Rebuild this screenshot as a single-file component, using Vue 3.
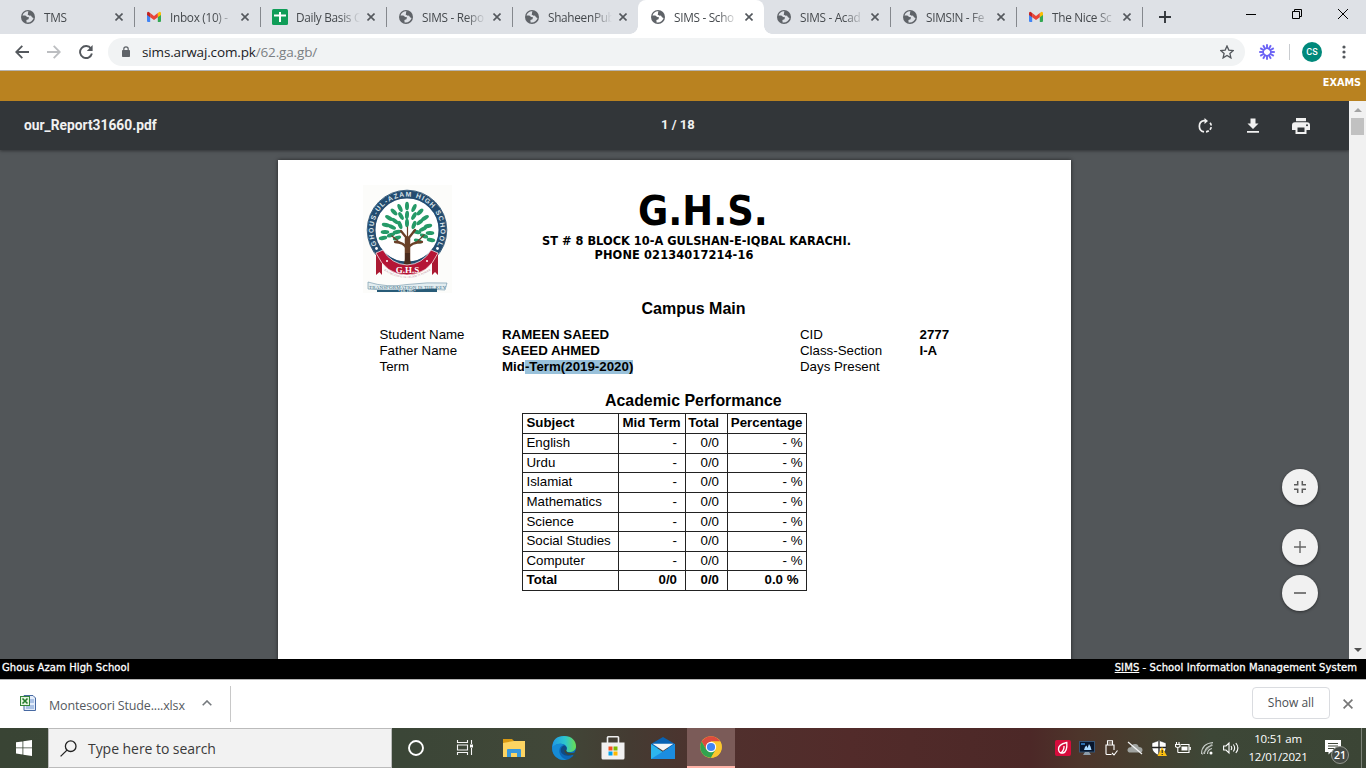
<script setup>
const tabs = [
  { title: 'TMS', icon: 'globe' },
  { title: 'Inbox (10) - ', icon: 'gmail' },
  { title: 'Daily Basis C', icon: 'sheets' },
  { title: 'SIMS - Repo', icon: 'globe' },
  { title: 'ShaheenPub', icon: 'globe' },
  { title: 'SIMS - Scho', icon: 'globe', active: true },
  { title: 'SIMS - Acad', icon: 'globe' },
  { title: 'SIMS!N - Fe', icon: 'globe' },
  { title: 'The Nice Sc', icon: 'gmail' },
]
const subjects = ['English', 'Urdu', 'Islamiat', 'Mathematics', 'Science', 'Social Studies', 'Computer']
const leaves = [
  [44, 21, 0], [37, 23, -25], [51, 23, 25], [31, 27, -45], [57, 27, 45], [44, 30, 5], [38, 31, -30], [51, 31, 30],
  [26, 33, -60], [62, 33, 60], [32, 36, -50], [57, 37, 50], [23, 40, -75], [65, 41, 75], [29, 42, -65], [60, 44, 65],
  [22, 47, -90], [67, 48, 90], [28, 50, 70], [61, 51, -70], [44, 38, 0], [37, 40, -20], [51, 40, 20], [34, 47, 80], [54, 47, -80],
  [20, 53, 80], [68, 55, -80], [34, 53, 70], [55, 56, -70],
]
const rays = Array.from({ length: 12 }, (_, i) => i * 30)
</script>

<template>
  <div class="screen">
    <div class="tabstrip">
      <div v-for="(t, i) in tabs" :key="i" class="tab" :class="{ active: t.active, noline: i === 4 || i === 5 }">
        <svg v-if="t.icon === 'globe'" class="fav" viewBox="0 0 14 14">
          <circle cx="7" cy="7" r="7" fill="#5f6368" />
          <path d="M7.6 1.3C5 .9 2.2 2.600 1.500 5.500L4.300 5.600 6.200 7.100 8 7.300 7.500 9.200 5.400 9.900 5.600 12.400C8.500 13.100 11.800 11.200 12.600 8L11 7.200 10.300 5.300 8.300 5.500 6.700 4.500 7.300 3Z" :fill="t.active ? '#fff' : '#dee1e6'" />
          <path d="M7.600 1.300 10.300 2.200 12.200 4.500 12.600 7.200 11 7 10.200 5.400 8 5.300 6.800 4.300Z" fill="#5f6368" />
        </svg>
        <svg v-else-if="t.icon === 'gmail'" class="fav" viewBox="0 0 14 14">
          <path d="M0 3.500V11q0 1 1 1H3.200V5.800Z" fill="#4285f4" />
          <path d="M14 3.500V11q0 1-1 1H10.800V5.800Z" fill="#34a853" />
          <path d="M10.800 3 12.200 2Q14 1.400 14 3.600V5L10.800 7.300Z" fill="#fbbc04" />
          <path d="M3.200 3 7 5.900 10.800 3V7.300L7 10.100 3.200 7.300Z" fill="#ea4335" />
          <path d="M3.200 3 1.800 2Q0 1.400 0 3.600V5L3.200 7.300Z" fill="#c5221f" />
        </svg>
        <svg v-else class="fav sheet" viewBox="0 0 16 16">
          <rect width="16" height="16" rx="1.500" fill="#0f9d58" />
          <path d="M7 3H9V5.500H14V7.500H9V13H7V7.500H2V5.500H7Z" fill="#fff" />
        </svg>
        <span class="tabtext">{{ t.title }}</span>
        <svg class="tabx" viewBox="0 0 8 8"><path d="M.5.5 7.500 7.500M7.500.5.5 7.500" stroke="#54585d" stroke-width="1.600" /></svg>
      </div>
      <svg class="plus" viewBox="0 0 12 12"><path d="M6 0V12M0 6H12" stroke="#33373b" stroke-width="1.900" /></svg>
      <div class="wincontrols">
        <svg viewBox="0 0 10 10"><path d="M0 5.500H10" stroke="#000" /></svg>
        <svg viewBox="0 0 10 10" fill="none" stroke="#000"><path d="M.5 2.500H7.500V9.500H.5ZM2.500 2.500V.5H9.500V7.500H7.500" /></svg>
        <svg viewBox="0 0 10 10"><path d="M0 0 10 10M10 0 0 10" stroke="#000" /></svg>
      </div>
    </div>

    <div class="addressbar">
      <svg class="nav back" viewBox="0 0 14 14" fill="none" stroke="#54585d" stroke-width="1.800"><path d="M14 7H1.300M7.300.8 1.200 7 7.300 13.200" /></svg>
      <svg class="nav fwd" viewBox="0 0 14 14" fill="none" stroke="#bcbec1" stroke-width="1.800"><path d="M0 7H12.700M6.700.8 12.800 7 6.700 13.200" /></svg>
      <svg class="nav reload" viewBox="0 0 14 14"><path d="M12 3.600A6 6 0 1 0 12.900 8.500" fill="none" stroke="#54585d" stroke-width="1.900" /><path d="M13.600 0V6H7.800Z" fill="#54585d" /></svg>
      <div class="omnibox">
        <svg class="lock" viewBox="0 0 8 11"><path d="M1.800 4.500V3A2.200 2.200 0 0 1 6.200 3V4.500" fill="none" stroke="#5f6368" stroke-width="1.200" /><rect y="4" width="8" height="7" rx=".8" fill="#5f6368" /></svg>
        <span class="url">sims.arwaj.com.pk<i>/62.ga.gb/</i></span>
        <svg class="star" viewBox="0 0 14 14"><path d="M7 1 8.800 5.100 13.200 5.500 9.900 8.400 10.900 12.900 7 10.500 3.100 12.900 4.100 8.400.8 5.500 5.200 5.100Z" fill="none" stroke="#54585d" stroke-width="1.300" /></svg>
      </div>
      <svg class="burst" viewBox="-8 -8 16 16"><path v-for="a in rays" :key="a" d="M0-3V-7.800" stroke="#6b63f5" stroke-width="1.900" :transform="`rotate(${a})`" /><circle r="3.800" fill="none" stroke="#6b63f5" stroke-width="1.500" /></svg>
      <div class="divider"></div>
      <div class="avatar">CS</div>
      <svg class="kebab" viewBox="0 0 4 14" fill="#54585d"><circle cx="2" cy="2" r="1.600" /><circle cx="2" cy="7" r="1.600" /><circle cx="2" cy="12" r="1.600" /></svg>
    </div>

    <div class="sitebar">EXAMS</div>

    <div class="viewer">
      <div class="pdf">
        <div class="pdfbar">
          <span class="filename">our_Report31660.pdf</span>
          <span class="pages">1 / 18</span>
          <div class="actions">
            <svg viewBox="0 0 16 16" fill="none" stroke="#f1f1f1" stroke-width="1.700"><path d="M7 13.800A5.700 5.700 0 0 1 7 2.600H9" /><path d="M7.500 0 11 3 7.500 6Z" fill="#f1f1f1" stroke="none" /><path d="M9 13.800A5.700 5.700 0 0 0 12.500 4" stroke-dasharray="3 1.500" /></svg>
            <svg viewBox="0 0 16 16" fill="#f1f1f1"><path d="M5.500 .5H10.500V5.500H13.500L8 11 2.500 5.500H5.500ZM2 13H14V14.700H2Z" /></svg>
            <svg viewBox="0 0 18 16" fill="#f1f1f1" class="printer"><path d="M4 0H14V3.300H4ZM3 4.300H15A3 3 0 0 1 18 7.300V12H14.500V16H3.500V12H0V7.300A3 3 0 0 1 3 4.300Z" /><path d="M5.500 9.500H12.500V14H5.500Z" fill="#323639" /><circle cx="15" cy="7.300" r="1" fill="#323639" /></svg>
          </div>
        </div>

        <div class="page">
          <div class="letterhead">
            <svg class="crest" viewBox="0 0 89 108">
              <defs><path id="ring" d="M15.800 63.500A33.600 33.600 0 1 1 72.200 63.500" /><path id="low" d="M20 85Q44 101 68 85" /></defs>
              <rect width="89" height="108" fill="#fcfcfa" />
              <circle cx="44" cy="45" r="39.800" fill="#fff" stroke="#456883" stroke-width="1" />
              <circle cx="44" cy="45" r="35.500" fill="none" stroke="#244c70" stroke-width="8" />
              <circle cx="44" cy="45" r="31" fill="#fff" />
              <text class="ringtext" fill="#dbe4ea"><textPath href="#ring" startOffset="4" textLength="136">GHOUS-UL-AZAM HIGH SCHOOL</textPath></text>
              <g fill="#fff"><circle cx="13.500" cy="63.500" r="1.400" /><circle cx="74.500" cy="63.500" r="1.400" /></g>
              <g fill="#259a68"><ellipse v-for="(l, i) in leaves" :key="i" :cx="l[0]" :cy="l[1]" rx="2" ry="4.300" :transform="`rotate(${l[2]} ${l[0]} ${l[1]})`" /></g>
              <g fill="none" stroke="#6a4028" stroke-linecap="round"><path d="M44.500 81V54" stroke-width="5.500" /><path d="M44 64Q41 57 32 57M44.500 64Q48 57 59 57M44.500 54 38 46M45 54 52 45" stroke-width="2.300" /><path d="M44.500 54V42M36 57 29 51M54 57 61 50" stroke-width="1.200" /></g>
              <path d="M38 82Q43 79 42 68H47Q46 79 51 82Z" fill="#4a2b1e" />
              <path d="M13 67 19 71V90L16.500 87 13 90ZM75 67 69 71V90L72 87 75 90Z" fill="#aa1932" />
              <path d="M13 68 20 65Q28 79 44 80Q60 79 68 65L75 68Q65 90 44 90Q23 90 13 68Z" fill="#b51636" stroke="#fff" stroke-width=".7" />
              <g fill="#fff"><circle cx="24" cy="76" r="1" /><circle cx="64" cy="76" r="1" /></g>
              <text x="44.500" y="88" class="ghs" text-anchor="middle" fill="#fff">G.H.S</text>
              <text class="tiny" fill="#b98a94"><textPath href="#low" startOffset="1" textLength="50">KNOWLEDGE OF ISLAM IS POWER</textPath></text>
              <path d="M5 97Q24 103 44 99.500Q64 97 84 98L82 105Q64 103 44 105Q24 106 5 104Z" fill="#e3edf0" stroke="#668da2" stroke-width=".6" />
              <path d="M14 105Q44 105 74 103.500V107H14Z" fill="#285b78" />
              <text x="6" y="103.800" class="motto" textLength="77" fill="#426f86">TRANSFORMATION IS THE KEY</text>
              <text x="44" y="107.200" class="est" text-anchor="middle" fill="#fff">• Est. 1995 •</text>
            </svg>
            <div class="headtext">
              <div class="school">G.H.S.</div>
              <div class="addr">ST # 8 BLOCK 10-A GULSHAN-E-IQBAL KARACHI.</div>
              <div class="addr phone">PHONE 02134017214-16</div>
            </div>
          </div>
          <div class="campus">Campus Main</div>
          <div class="details">
            <span>Student Name</span><b>RAMEEN SAEED</b><span>CID</span><b>2777</b>
            <span>Father Name</span><b>SAEED AHMED</b><span>Class-Section</span><b>I-A</b>
            <span>Term</span><b>Mid<mark>-Term(2019-2020)</mark></b><span>Days Present</span><b></b>
          </div>
          <div class="perf">Academic Performance</div>
          <div class="marks">
            <div class="row bold head"><span>Subject</span><span>Mid Term</span><span>Total</span><span>Percentage</span></div>
            <div v-for="s in subjects" :key="s" class="row"><span>{{ s }}</span><span>-</span><span>0/0</span><span>- %</span></div>
            <div class="row bold total"><span>Total</span><span>0/0</span><span>0/0</span><span>0.0 %</span></div>
          </div>
        </div>

        <div class="zoomers">
          <div class="round"><svg viewBox="0 0 12 12"><path d="M0 3.700H3.700V0M12 3.700H8.300V0M0 8.300H3.700V12M12 8.300H8.300V12" fill="none" stroke="#5c5c5c" stroke-width="1.500" /></svg></div>
          <div class="round gap"><svg viewBox="0 0 12 12"><path d="M6 0V12M0 6H12" stroke="#666" stroke-width="1.400" /></svg></div>
          <div class="round"><svg viewBox="0 0 12 12"><path d="M0 6H12" stroke="#666" stroke-width="1.700" /></svg></div>
        </div>
      </div>
      <div class="scrollbar">
        <svg viewBox="0 0 8 4"><path d="M0 4 4 0 8 4Z" fill="#a3a3a3" /></svg>
        <div class="thumb"></div>
        <svg class="down" viewBox="0 0 8 4"><path d="M0 0H8L4 4Z" fill="#505050" /></svg>
      </div>
    </div>

    <div class="sitefoot"><span>Ghous Azam High School</span><span class="sys"><u>SIMS</u> - School Information Management System</span></div>

    <div class="downloads">
      <svg class="xls" viewBox="0 0 16 16"><path d="M4 .5H13L15.500 3V15.500H4Z" fill="#e4edfa" stroke="#4769a2" /><path d="M10 5H14M10 7H14M6 11H14M6 13H14" stroke="#7397cf" /><rect x=".5" y="1.500" width="9" height="9" fill="#e5f4df" stroke="#34853a" /><path d="M2.500 3.500 7.500 8.500M7.500 3.500 2.500 8.500" stroke="#237b2d" stroke-width="1.600" /></svg>
      <span class="file">Montesoori Stude....xlsx</span>
      <svg class="chev" viewBox="0 0 10 6"><path d="M.7 5.300 5 1 9.300 5.300" fill="none" stroke="#75797d" stroke-width="1.600" /></svg>
      <div class="dline"></div>
      <div class="showall">Show all</div>
      <svg class="dlx" viewBox="0 0 10 10"><path d="M.6.6 9.400 9.400M9.400.6.6 9.400" stroke="#777" stroke-width="1.700" /></svg>
    </div>

    <div class="taskbar">
      <div class="start"><svg viewBox="0 0 16 16" fill="#fff"><path d="M0 2.300 6.500 1.400V7.500H0ZM7.300 1.300 16 0V7.500H7.300ZM0 8.300H6.500V14.500L0 13.600ZM7.300 8.300H16V16L7.300 14.700Z" /></svg></div>
      <div class="search"><svg viewBox="0 0 17 17" fill="none" stroke="#222" stroke-width="1.300"><circle cx="10.700" cy="6.200" r="5.300" /><path d="M7 10.100.6 16.400" /></svg><span>Type here to search</span></div>
      <div class="apps">
        <div><svg viewBox="0 0 24 24"><circle cx="12" cy="12" r="7" fill="none" stroke="#fff" stroke-width="1.900" /></svg></div>
        <div><svg viewBox="0 0 24 24" fill="none" stroke="#f5f5f5" stroke-width="1.100"><path d="M4.500 4V6.500H14.500V4M4.500 19V16.500H14.500V19M4.500 9H14.500V14H4.500ZM18.500 4V8M18.500 12V19" /><path d="M17 8.500H20V11.500H17Z" fill="#fff" stroke="none" /></svg></div>
        <div><svg viewBox="0 0 24 24"><path d="M1 3H10L12 5V9H1Z" fill="#d99a13" /><path d="M1 7 12 5H23V21H1Z" fill="#fcd462" /><path d="M5 21V14Q5 13 6 13H18Q19 13 19 14V21H15V17H9V21Z" fill="#3898dc" /></svg></div>
        <div><svg viewBox="0 0 24 24">
          <defs><linearGradient id="eg" x1="0" x2="1"><stop stop-color="#2098e5" /><stop offset=".55" stop-color="#2dc6cd" /><stop offset="1" stop-color="#6adf50" /></linearGradient></defs>
          <circle cx="12" cy="12" r="12" fill="#0b67b7" /><path d="M.2 11Q1 0 12 0C20 0 24 5 24 10.500C24 14 21 16 17.500 16C15 16 13.500 15 14.600 13.400C16 10.500 12.500 7.800 9 7.700Q4 7.600.2 12Z" fill="url(#eg)" /><path d="M.1 12C3 7 9 7 12 9Q7 10 7.300 15.500C7.600 20 12 24 16 23.300C8 26 0 20 .1 12Z" fill="#168bd5" /><path d="M8.800 13.500Q9.300 10.300 12.500 9.400Q15.300 11 14.500 13.500C13 15.500 15.500 18.500 21.700 17.600Q19 20 15.500 19.800C11.500 19.500 8.300 17 8.800 13.500Z" fill="#104a83" /><path d="M14.400 13.700C13 15.600 17 17.800 22.300 16.800L24 14V22H22L21.500 18.800Q14 20.500 12 14.500Z" fill="#39473d" /></svg></div>
        <div><svg viewBox="0 0 24 24"><path d="M6.500 8V1.500Q6.500.8 7.200.8H16.800Q17.500.8 17.500 1.500V8" fill="none" stroke="#eee" stroke-width="1.600" /><path d="M.5 6.500H23.500V22Q23.500 23.500 22 23.500H2Q.5 23.500.5 22Z" fill="#f1f1f1" /><path d="M7.500 10.500H11.500V14.500H7.500Z" fill="#f25022" /><path d="M12.500 10.500H16.500V14.500H12.500Z" fill="#7fba00" /><path d="M7.500 15.500H11.500V19.500H7.500Z" fill="#00a4ef" /><path d="M12.500 15.500H16.500V19.500H12.500Z" fill="#ffb900" /></svg></div>
        <div><svg viewBox="0 0 24 24"><path d="M0 8 12 1 24 8V12H0Z" fill="#0862b3" /><path d="M0 8 12 16 24 8V23H0Z" fill="#2cb5ee" /><path d="M0 23 24 8V23Z" fill="#1b8de0" /><path d="M1.500 7.800H22.500L12 14.700Z" fill="#f4f5f7" /></svg></div>
        <div class="on"><svg viewBox="0 0 24 24"><circle cx="12" cy="12" r="10.800" fill="#fbc72e" /><path d="M2.650 6.600A10.800 10.800 0 0 1 21.350 6.600H12L7.300 14.700Z" fill="#dd4b3e" /><path d="M2.650 6.600A10.800 10.800 0 0 0 12 22.800L16.700 14.700H7.300Z" fill="#31a350" /><path d="M12 22.800A10.800 10.800 0 0 0 21.350 6.600H12L16.700 14.700Z" fill="#fbc72e" /><circle cx="12" cy="12" r="5.200" fill="#fff" /><circle cx="12" cy="12" r="4.100" fill="#4285f4" /></svg></div>
      </div>
      <div class="tray">
        <svg viewBox="0 0 16 16"><rect width="16" height="16" rx="2" fill="#d60c3c" /><path d="M11.800 2.500Q3 4.500 3.500 9.500Q4 13.500 8 13Q12.500 12 11.800 2.500ZM9 6Q9.500 10 5.500 13.500" fill="none" stroke="#fff" stroke-width="1.300" /></svg>
        <svg viewBox="0 0 16 16"><rect x=".5" y="1.500" width="15" height="10.500" fill="#07152c" stroke="#355475" /><path d="M2 3H6V5H2Z" fill="#2d6fae" /><path d="M5 10 6 7 7.500 5.500 8.500 8 10 4 11.500 6.500 12.500 10Z" fill="#a8d9ff" /><path d="M6 12H10L12 15H4Z" fill="#8d9caa" /></svg>
        <svg viewBox="0 0 16 16" fill="none" stroke="#fff" stroke-width="1.100"><path d="M4.500 5V.8H9.500V5M6.200 2.500V3.500M8 2.500V3.500M8.500 14.500H4Q3 14.500 3 13.500V5H11V10M9 13 11 15 14.500 10.500" /></svg>
        <svg viewBox="0 0 16 16"><path d="M2 12.500Q-.5 11 1 8.500Q2 7 4 7.300Q5 3.500 8.500 4Q11 4 11.700 7Q15.500 7 15.500 10Q15.500 12.500 13 12.500Z" fill="#a0a3a0" /><path d="M1 2 15 14" stroke="#f4f4f4" stroke-width="1.200" /></svg>
        <svg viewBox="0 0 16 16"><path d="M8 .5 15 3V8Q14.500 13 8 15.500Q1.500 13 1 8V3Z" fill="#fff" stroke="#222" stroke-width=".5" /><path d="M8 1V15M1 7.500H15" stroke="#222" stroke-width="1.300" /><path d="M11 7 16 16H6.500Z" fill="#fcbf12" /><path d="M11.200 10V13M11.200 14V15" stroke="#222" stroke-width="1.100" /></svg>
        <svg viewBox="0 0 16 16" fill="none" stroke="#fff" stroke-width="1.100"><path d="M1.500 2V4.500M4 2V4.500M.5 4.500H5V6.500Q2.700 8.500 .5 6.500ZM2.800 7.500V12.500M6 4.500H14V12.500H2.800M15.300 7V10" /><path d="M6.500 6.500H12.500V10.500H6.500Z" fill="#fff" stroke="none" /></svg>
        <svg viewBox="0 0 16 16" fill="none" stroke="#c9ceca" stroke-width="1.100"><path d="M2.500 14Q2.500 3.500 14 2.500M5.500 14Q5.500 6.500 13.500 5.500M8.500 14Q8.500 9.500 13 8.500" /><circle cx="12" cy="13" r="1.500" fill="#fff" stroke="none" /><path d="M3 14.500 13.500 3.500" opacity=".6" /></svg>
        <svg viewBox="0 0 16 16" fill="none" stroke="#fff" stroke-width="1.100"><path d="M.6 6H3L6 3V13L3 10H.6ZM8 6Q9.500 8 8 10M10.300 4.500Q13 8 10.300 11.500M12.800 3Q17 8 12.800 13" /></svg>
      </div>
      <div class="clock"><span>10:51 am</span><span>12/01/2021</span></div>
      <div class="notif"><svg viewBox="0 0 16 15"><path d="M0 0H16V12H6L3.500 14.500V12H0Z" fill="#fff" /><path d="M3 3.500H13M3 6H13M3 8.500H9" stroke="#41483a" stroke-width="1" /></svg><b>21</b></div>
      <div class="peek"></div>
    </div>
  </div>
</template>

<style>
html, body { margin: 0; overflow: hidden; }
</style>

<style scoped>
* { box-sizing: border-box; }
svg { display: block; flex: none; }
.screen { width: 1366px; height: 768px; display: flex; flex-direction: column; overflow: hidden; background: #fff; font-family: "Open Sans", "Noto Sans", sans-serif; white-space: nowrap; }
.tabstrip { height: 34px; flex: none; background: #dee1e6; display: flex; padding-left: 8px; align-items: stretch; }
.tab { width: 126px; height: 34px; flex: none; display: flex; align-items: center; padding-left: 13px; position: relative; }
.tab::after { content: ""; position: absolute; right: -1px; top: 7px; height: 20px; width: 1px; background: #85888d; }
.tab.noline::after { display: none; }
.tab.active { background: #fff; border-radius: 8px 8px 0 0; }
.tab.active::before { content: ""; position: absolute; bottom: 0; left: -8px; width: 8px; height: 8px; background: radial-gradient(circle at 0 0, transparent 7.500px, #fff 8px); }
.tab.active::after { display: block; top: auto; bottom: 0; right: -8px; width: 8px; height: 8px; background: radial-gradient(circle at 100% 0, transparent 7.500px, #fff 8px); }
.fav { width: 14px; height: 14px; }
.sheet { width: 16px; height: 16px; margin-left: -1px; margin-right: -1px; }
.tabtext { width: 66px; margin-left: 9px; overflow: hidden; font-size: 11.800px; letter-spacing: -.3px; line-height: 18px; color: #45494d; -webkit-mask-image: linear-gradient(90deg, #000 44px, transparent 64px); mask-image: linear-gradient(90deg, #000 44px, transparent 64px); }
.tabx { width: 8px; height: 8px; margin-left: 5px; }
.plus { width: 12px; height: 12px; margin: 11px 0 0 17px; }
.wincontrols { display: flex; gap: 36px; margin: 9px 0 0 75px; }
.wincontrols svg { width: 10px; height: 10px; }
.addressbar { height: 37px; flex: none; display: flex; align-items: center; padding: 0 0 1px 15px; border-bottom: 1px solid #b6b4b2; }
.nav { width: 14px; height: 14px; }
.fwd { margin-left: 18px; }
.reload { margin-left: 18px; }
.omnibox { height: 28px; width: 1137px; border-radius: 14px; margin-left: 15px; background: #f1f3f4; display: flex; align-items: center; padding-left: 14px; }
.lock { width: 8px; height: 11px; }
.url { margin-left: 12px; font-size: 13.500px; letter-spacing: -.15px; color: #202124; }
.url i { font-style: normal; color: #7b7f83; }
.star { width: 14px; height: 14px; margin-left: auto; margin-right: 11px; }
.burst { width: 16px; height: 16px; margin-left: 14px; }
.divider { width: 1px; height: 16px; background: #c9ccd0; margin-left: 14px; }
.avatar { width: 20px; height: 20px; border-radius: 50%; background: #00897b; color: #fff; font: 500 9px/20px Roboto, sans-serif; letter-spacing: .2px; text-align: center; margin-left: 12px; }
.kebab { width: 4px; height: 14px; margin-left: 20px; }
.sitebar { height: 30px; flex: none; background: #b98220; color: #fff; font: bold 9.700px/24px "DejaVu Sans", sans-serif; text-align: right; padding-right: 5px; }
.viewer { height: 558px; flex: none; display: flex; }
.pdf { width: 1349px; background: #525659; position: relative; overflow: hidden; }
.pdfbar { height: 49px; background: #323639; display: flex; align-items: center; padding-left: 24px; color: #f1f1f1; font: bold 13px Roboto, sans-serif; box-shadow: 0 1px 3px rgba(0,0,0,.4); position: relative; }
.filename { width: 637px; font-size: 13.800px; padding-bottom: 1px; }
.pages { padding-bottom: 2px; }
.actions { margin-left: auto; padding-right: 40px; display: flex; gap: 32px; }
.actions svg { width: 16px; height: 16px; }
.actions .printer { width: 18px; margin-left: -1px; margin-right: -1px; }
.page { width: 793px; height: 520px; margin: 10px 0 0 278px; background: #fff; box-shadow: 0 0 4px rgba(0,0,0,.6); font: 13.300px/16px "Liberation Sans", Arial, sans-serif; color: #000; }
.letterhead { display: flex; height: 140px; padding: 25px 0 0 85px; }
.crest { width: 89px; height: 108px; }
.ringtext { font: bold 6.800px "Liberation Sans", sans-serif; }
.ghs { font: bold 9px "Liberation Serif", serif; }
.tiny { font: 2.800px "Liberation Serif", serif; }
.motto { font: 5px "Liberation Serif", serif; }
.est { font: bold 3.300px "Liberation Serif", serif; }
.headtext { margin-left: 90px; font-family: "DejaVu Sans", sans-serif; font-weight: bold; }
.school { font-size: 41px; line-height: 46px; height: 49px; padding-top: 3px; font-stretch: condensed; margin-left: 96px; }
.addr { font-size: 11.400px; line-height: 14px; letter-spacing: .01px; }
.phone { margin-left: 52.500px; letter-spacing: .12px; }
.campus { font-weight: bold; font-size: 16px; line-height: 18px; margin-left: 363.500px; }
.details { display: grid; grid-template-columns: 122.500px 298px 119.500px auto; margin: 9px 0 0 101.500px; grid-auto-rows: 16px; }
.details b { font-size: 13.300px; }
mark { background: #99c1da; color: #000; padding: 0; line-height: 14px; display: inline-block; }
.perf { font-weight: bold; font-size: 15.900px; line-height: 18px; margin: 17px 0 0 327px; }
.marks { margin: 3px 0 0 244px; width: 285px; border: 1px solid #222; border-top: 0; }
.row { display: grid; grid-template-columns: 95px 67px 42px 79px; height: 20px; border-top: 1px solid #222; line-height: 18px; }
.row:nth-child(3), .row:nth-child(6), .row:nth-child(8) { height: 19px; }
.row span { text-align: right; padding-right: 8px; border-left: 1px solid #222; }
.row span:first-child { text-align: left; padding-left: 3.500px; padding-right: 0; border-left: 0; }
.row span:nth-child(4) { padding-right: 3.500px; }
.head span:nth-child(2) { padding-right: 4.500px; }
.total span:nth-child(4) { padding-right: 7.500px; }
.bold { font-weight: bold; }
.zoomers { position: absolute; right: 31px; top: 368px; display: flex; flex-direction: column; gap: 10px; }
.round { width: 36px; height: 36px; border-radius: 50%; background: #f1f1f1; display: flex; align-items: center; justify-content: center; box-shadow: 0 1px 3px rgba(0,0,0,.45); }
.round svg { width: 12px; height: 12px; }
.gap { margin-top: 14px; }
.scrollbar { width: 17px; background: #f1f1f1; display: flex; flex-direction: column; align-items: center; padding-top: 7px; }
.scrollbar svg { width: 8px; height: 4px; }
.thumb { width: 13px; height: 17px; background: #c1c1c1; margin-top: 6px; }
.scrollbar .down { margin-top: auto; margin-bottom: 7px; }
.sitefoot { height: 21px; flex: none; background: #000; border-bottom: 1px solid #b5b5b5; color: #fff; display: flex; justify-content: space-between; padding: 0 9px 0 2px; font: 10px/18px "DejaVu Sans", sans-serif; letter-spacing: .1px; -webkit-text-stroke: .3px #fff; }
.downloads { height: 48px; flex: none; display: flex; align-items: center; padding-left: 20px; }
.xls { width: 16px; height: 16px; margin-bottom: 2px; }
.file { font-size: 12.500px; letter-spacing: -.15px; margin: 3px 0 0 13px; width: 136px; color: #555a60; }
.chev { width: 10px; height: 6px; margin: 0 0 2px 17px; }
.dline { width: 1px; height: 36px; background: #c8c8c8; margin-left: 18px; }
.showall { width: 78px; height: 32px; border: 1px solid #dadce0; border-radius: 4px; color: #4a4f54; font-size: 12px; line-height: 30px; text-align: center; margin-left: auto; margin-bottom: 2px; }
.dlx { width: 10px; height: 10px; margin: 0 13px 0 13px; }
.taskbar { height: 40px; flex: none; display: flex; background: linear-gradient(90deg, #394434 0, #3b4637 400px, #414738 560px, #443b32 630px, #50302d 720px, #522b2a 850px, #4c2827 1030px, #4d352b 1080px, #454030 1150px, #3d4737 1210px, #3b4535 100%); color: #fff; }
.start { width: 48px; padding: 12px 0 0 16px; }
.start svg { width: 16px; height: 16px; }
.search { width: 344px; height: 40px; background: #f2f2f2; border: 1px solid #bbb; display: flex; align-items: center; padding-left: 11px; color: #3a3a3a; font-size: 14px; letter-spacing: -.05px; }
.search svg { width: 17px; height: 17px; }
.search span { margin-left: 11px; }
.apps { display: flex; }
.apps div { width: 49.200px; height: 40px; display: flex; align-items: center; justify-content: center; }
.apps div:nth-child(-n+3) svg { margin-left: -2px; }
.apps svg { width: 24px; height: 24px; }
.apps .on { width: 48px; background: #7b5b58; border-bottom: 2px solid #ffb3a8; }
.tray { display: flex; align-items: center; margin-left: auto; gap: 8px; }
.tray svg { width: 16px; height: 16px; }
.clock { width: 60px; display: flex; flex-direction: column; align-items: center; font-size: 11.500px; letter-spacing: -.2px; line-height: 18px; margin: 2px 0 0 9px; }
.notif { width: 28px; margin-left: 17px; padding-top: 12px; position: relative; }
.notif svg { width: 16px; height: 15px; }
.notif b { position: absolute; left: 6px; top: 18px; width: 18px; height: 18px; border-radius: 50%; background: #454b45; border: 1px solid #94978f; font: 600 10.500px/16px "Open Sans", sans-serif; text-align: center; }
.peek { width: 5px; height: 40px; border-left: 1px solid #7c8278; margin-left: 8px; }
</style>
